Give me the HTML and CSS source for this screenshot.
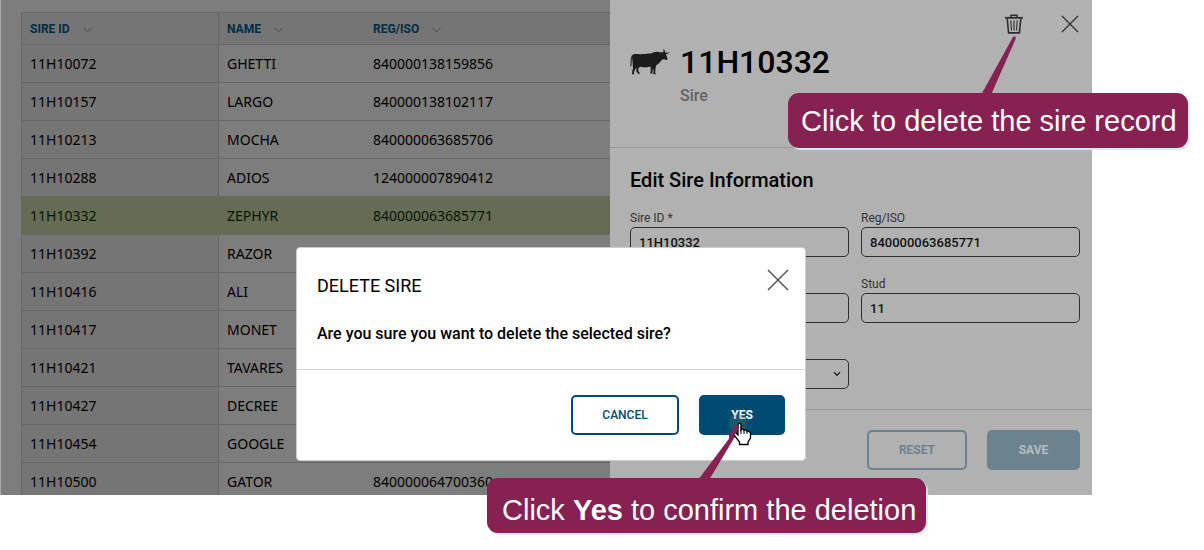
FILE: index.html
```html
<!DOCTYPE html>
<html lang="en">
<head>
<meta charset="utf-8">
<title>Delete Sire</title>
<link rel="stylesheet" href="styles.css">
</head>
<body>
<main class="stage">
  <section class="list">
    <table class="sires">
      <thead>
        <tr>
          <th class="col-id">SIRE ID <svg class="sort" viewBox="0 0 9 6"><path d="M.5 .8 4.5 4.8 8.5 .8"/></svg></th>
          <th class="col-name">NAME <svg class="sort" viewBox="0 0 9 6"><path d="M.5 .8 4.5 4.8 8.5 .8"/></svg></th>
          <th>REG/ISO <svg class="sort" viewBox="0 0 9 6"><path d="M.5 .8 4.5 4.8 8.5 .8"/></svg></th>
        </tr>
      </thead>
      <tbody>
        <tr><td>11H10072</td><td>GHETTI</td><td>840000138159856</td></tr>
        <tr><td>11H10157</td><td>LARGO</td><td>840000138102117</td></tr>
        <tr><td>11H10213</td><td>MOCHA</td><td>840000063685706</td></tr>
        <tr><td>11H10288</td><td>ADIOS</td><td>124000007890412</td></tr>
        <tr class="selected"><td>11H10332</td><td>ZEPHYR</td><td>840000063685771</td></tr>
        <tr><td>11H10392</td><td>RAZOR</td><td></td></tr>
        <tr><td>11H10416</td><td>ALI</td><td></td></tr>
        <tr><td>11H10417</td><td>MONET</td><td></td></tr>
        <tr><td>11H10421</td><td>TAVARES</td><td></td></tr>
        <tr><td>11H10427</td><td>DECREE</td><td></td></tr>
        <tr><td>11H10454</td><td>GOOGLE</td><td></td></tr>
        <tr><td>11H10500</td><td>GATOR</td><td>840000064700360</td></tr>
      </tbody>
    </table>
  </section>

  <aside class="panel">
    <header class="panel-head">
      <div class="tools">
        <button class="icon-btn" aria-label="Delete">
          <svg width="18" height="20" viewBox="0 0 18 20" fill="none" stroke="#2e2e2e"><path d="M0 3.8H18" stroke-width="1.8"/><path d="M6 3.2V1.2H12V3.2" stroke-width="1.5"/><path d="M2.2 4.5 3.6 18.9H14.4L15.8 4.5" stroke-width="1.6"/><path d="M5.8 6.5 6.5 16.5M9 6.5V16.5M12.2 6.5 11.5 16.5" stroke-width="1.1"/></svg>
        </button>
        <button class="icon-btn" aria-label="Close panel">
          <svg width="18" height="18" viewBox="0 0 18 18" fill="none" stroke="#333" stroke-width="1.3"><path d="M1 1 17 17M17 1 1 17"/></svg>
        </button>
      </div>
      <div class="identity">
        <svg class="bull" width="40" height="26" viewBox="0 0 40 26" fill="#1c1c1c"><path d="M3 5.4C5 4.6 8 5.3 11 5.2 14 5.2 16 4.8 19 4.6 21.5 4.400 23 3.200 25.500 2.900 27.500 2.600 29 3 31 3.300L32.500 3.400C33.600 3.200 34 1.800 33 0 34.800 1 35.400 2.600 35 3.600 37 4 38.700 3.600 39.500 2.700 39.100 4.400 37.500 5 36 4.900L37 8.200C37.600 9.400 37.800 10 37.200 10.700 36.500 11.300 35.400 11 34.400 10.300 33 10 32 10.600 30.800 12 29.500 14.200 27.800 15.300 26.200 16.400L25.500 19.500 25.200 23.800 26 25.300H23.500L23.300 24.300 23.500 20.500 22.800 20.200 22.300 23.400 22.600 24.600H20.300L20.800 21 20.600 17.600C17 18.800 14 18.200 10 17.700L8.600 19 8.200 21.800 10.200 24.700H8L6.200 21.900 6.500 18.500 5 20.800 3.800 23.600 4.300 25.200H1.900L2.300 22 3 19.700 2.800 17.200C2.800 15.500 2.600 14 2.500 12.500L2 8.500C1.500 11 1.800 14 1.400 16.800L.3 18.300 .6 12.500C.7 9 1.200 6.200 3 5.400Z"/></svg>
        <div>
          <h1 class="sire-title">11H10332</h1>
          <p class="sire-kind">Sire</p>
        </div>
      </div>
    </header>
    <form class="panel-form">
      <h2 class="form-title">Edit Sire Information</h2>
      <div class="fields">
        <div class="field"><label for="sire-id">Sire ID *</label><input id="sire-id" value="11H10332"></div>
        <div class="field"><label for="reg">Reg/ISO</label><input id="reg" value="840000063685771"></div>
        <div class="field"><input aria-label="Name"></div>
        <div class="field"><label for="stud">Stud</label><input id="stud" value="11"></div>
        <div class="field">
          <select aria-label="Breed"><option></option></select>
          <svg class="caret" width="8" height="6" viewBox="0 0 8 6"><path d="M1 1.200 4 4.200 7 1.200" fill="none" stroke="#222" stroke-width="1.4"/></svg>
        </div>
      </div>
    </form>
    <footer class="panel-foot">
      <button class="btn btn-reset">RESET</button>
      <button class="btn btn-save">SAVE</button>
    </footer>
  </aside>

  <div class="dialog" role="dialog" aria-labelledby="dialog-title">
    <div class="dialog-body">
      <div class="dialog-head">
        <h2 id="dialog-title">DELETE SIRE</h2>
        <button class="icon-btn" aria-label="Close dialog">
          <svg width="22" height="22" viewBox="0 0 22 22" fill="none" stroke="#555" stroke-width="1.5"><path d="M1 1 21 21M21 1 1 21"/></svg>
        </button>
      </div>
      <p>Are you sure you want to delete the selected sire?</p>
    </div>
    <div class="dialog-foot">
      <button class="btn btn-cancel">CANCEL</button>
      <button class="btn btn-yes">YES</button>
    </div>
  </div>

  <div class="callout callout-delete">
    <p>Click to delete the sire record</p>
    <svg class="tail" width="40" height="60" viewBox="0 0 40 60"><path d="M2 60 34 2Q36 0 37 3L12 60Z"/></svg>
  </div>
  <div class="callout callout-yes">
    <p>Click <b>Yes</b> to confirm the deletion</p>
    <svg class="tail" width="50" height="56" viewBox="0 0 50 56"><path d="M0 56 39 4Q41 3 41 6L11 56Z"/></svg>
  </div>
  <svg class="pointer" width="36" height="36" viewBox="0 0 36 36">
    <circle cx="9" cy="10" r="9.500" fill="#66705a" fill-opacity=".3"/>
    <path d="M9 11.500Q10.500 9 12 11.500V17Q13.500 15 15 17.500 16.500 16 18 18.500 20 17.500 21.500 20V25L19 29V31.500H10.500V29L5 22Q4 19 7 20L9 22Z" fill="#fff" stroke="#000" stroke-width="1.300"/>
    <path d="M12 16V21M15 17.500V21M18 18.500V21" stroke="#000" fill="none"/>
    <path d="M0 22 7 13Q8 11 10 13L9 17 0 28Z" fill="#862152"/>
  </svg>
</main>
</body>
</html>
```
FILE: styles.css
```css
* { box-sizing: border-box; }
body {
  margin: 0;
  min-height: 100vh;
  padding: 0 112px 55px 0;
  background: #fff;
  font-family: Roboto, "Liberation Sans", sans-serif;
  color: #000;
}
h1, h2, p { margin: 0; }
button, input, select { font-family: inherit; margin: 0; }

.stage {
  position: relative;
  display: grid;
  grid-template-columns: minmax(0, 1fr) 482px;
  background: #b1b1b1;
}

/* sire list */
.list {
  height: 0;
  min-height: 100%;
  overflow: hidden;
  padding: 12px 0 0 20px;
  border-left: 1px solid #a9a9a9;
  background: #7d7d7d;
}
.sires {
  width: 100%;
  table-layout: fixed;
  border-collapse: separate;
  border-spacing: 0;
  border-top: 1px solid #676767;
  border-left: 1px solid #676767;
  border-top-left-radius: 3px;
  font: 14px/20px "Noto Sans", sans-serif;
}
.sires th, .sires td {
  height: 38px;
  padding: 0 8px;
  border-bottom: 1px solid #676767;
  text-align: left;
  white-space: nowrap;
}
.sires th {
  height: 32px;
  background: #757575;
  color: #002d45;
  font: 700 12px/16px Roboto, sans-serif;
}
.col-id { width: 197px; }
.col-name { width: 146px; }
.sires tr > :first-child { border-right: 1px solid #676767; }
.sires td:first-child { background: #757575; }
.sires .selected td { background: #656c56; color: #0a1400; }
.sires .selected td:first-child { border-right-color: #656c56; }
.sort {
  width: 9px;
  height: 6px;
  margin-left: 10px;
  fill: none;
  stroke: #4c4c4c;
}

/* edit panel */
.panel-head {
  height: 148px;
  padding: 14px 12px 0 20px;
  border-bottom: 1px solid #999;
}
.tools { display: flex; justify-content: flex-end; gap: 38px; height: 20px; padding-right: 1px; }
.icon-btn {
  display: grid;
  place-items: center;
  padding: 0;
  border: 0;
  background: none;
}
.identity { display: flex; gap: 10px; margin-top: 7px; }
.bull { margin-top: 8px; }
.sire-title { font-size: 32px; line-height: 42px; font-weight: 500; }
.sire-kind { padding-top: 3px; color: #626262; font-size: 16px; line-height: 20px; font-weight: 500; }
.panel-form { padding: 20px 12px 20px 20px; }
.form-title { font-size: 20px; line-height: 24px; font-weight: 500; }
.fields {
  display: grid;
  grid-template-columns: 1fr 1fr;
  grid-auto-rows: 48px;
  gap: 18px 12px;
  margin-top: 17px;
}
.field { position: relative; display: flex; flex-direction: column; justify-content: flex-end; }
.field label { color: #333; font-size: 12px; line-height: 18px; }
.field input, .field select {
  width: 100%;
  height: 30px;
  padding: 0 8px;
  border: 1px solid #2f2f2f;
  border-radius: 5px;
  background: transparent;
  color: #111;
  font-size: 13px;
  font-weight: 500;
}
.field select { appearance: none; }
.caret { position: absolute; right: 8px; bottom: 12px; pointer-events: none; }
.panel-foot {
  display: flex;
  justify-content: flex-end;
  gap: 20px;
  padding: 20px 12px 25px;
  border-top: 1px solid #999;
}

.btn {
  height: 40px;
  padding: 0;
  border: 2px solid #004b73;
  border-radius: 5px;
  background: transparent;
  color: #004b73;
  font-size: 12px;
  font-weight: 500;
}
.btn-reset { width: 100px; border-color: #6c838f; color: #6c838f; font-weight: 700; }
.btn-save { width: 93px; border-color: #6c838f; background: #6c838f; color: #b5bdc2; font-weight: 700; }
.btn-cancel { width: 108px; background: #fff; }
.btn-yes { width: 86px; background: #004b73; color: #fff; font-weight: 700; }

/* confirmation */
.dialog {
  position: absolute;
  left: 296px;
  top: 247px;
  width: 510px;
  border: 1px solid #ccc;
  border-radius: 4px;
  background: #fff;
}
.dialog-body { padding: 21px 16px 20px 20px; border-bottom: 1px solid #d4d4d4; }
.dialog-head { display: flex; align-items: flex-start; justify-content: space-between; }
.dialog-head h2 { padding-top: 6px; font-size: 18px; line-height: 22px; font-weight: 400; }
.dialog-body p { padding-top: 22px; font-size: 16px; line-height: 30px; font-weight: 500; }
.dialog-foot { display: flex; justify-content: flex-end; gap: 20px; padding: 25px 20px; }

/* annotations */
.callout {
  position: absolute;
  display: flex;
  align-items: center;
  height: 55px;
  padding: 0 13px;
  border-radius: 11px;
  background: #862152;
  box-shadow: 2px 2px 1px #d9e8f6;
  color: #fff;
  font: 29px/32px "Liberation Sans", Arial, sans-serif;
  white-space: nowrap;
}
.callout-delete { left: 788px; top: 93px; width: 400px; }
.callout-yes { left: 487px; top: 478px; width: 439px; padding: 8px 15px 0; }
.tail { position: absolute; bottom: 100%; margin-bottom: -2px; fill: #862152; }
.callout-delete .tail { left: 191px; }
.callout-yes .tail { left: 211px; }
.pointer { position: absolute; left: 729px; top: 413px; pointer-events: none; }
```
